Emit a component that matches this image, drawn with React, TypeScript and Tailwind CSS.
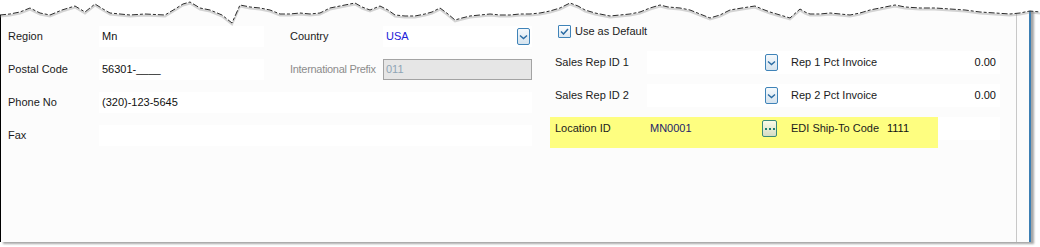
import React from "react";

const edgePts: [number, number][] = [
  [0, 15], [10, 14], [20, 12], [30, 8], [40, 13], [50, 15], [62, 10], [75, 6], [85, 12], [95, 4], [103, 9], [110, 13], [120, 14], [130, 15], [145, 14], [165, 15], [175, 9], [183, 4], [190, 2], [200, 8], [210, 10], [222, 15], [232, 23], [240, 5], [250, 7], [260, 8], [270, 10], [280, 14], [290, 14], [300, 13], [310, 14], [320, 13], [330, 8], [345, 5], [355, 3], [362, 7], [370, 10], [380, 6], [388, 10], [395, 15], [405, 16], [415, 16], [425, 14], [432, 12], [440, 8], [448, 14], [455, 20], [462, 18], [470, 16], [480, 15], [490, 14], [500, 15], [510, 15], [520, 14], [530, 14], [540, 13], [550, 11], [560, 8], [570, 3], [578, 6], [585, 10], [595, 13], [610, 16], [620, 15], [630, 14], [640, 12], [650, 8], [660, 5], [668, 7], [680, 8], [690, 10], [700, 14], [710, 18], [720, 15], [730, 10], [742, 8], [755, 6], [762, 9], [770, 12], [780, 15], [790, 18], [800, 9], [805, 12], [810, 14], [820, 14], [830, 13], [840, 14], [850, 15], [860, 13], [870, 10], [880, 8], [895, 5], [905, 7], [920, 8], [935, 8], [950, 9], [965, 10], [980, 12], [995, 13], [1010, 14], [1020, 13], [1030, 11], [1040, 12],
];

function TornEdge() {
  const line = edgePts.map((p) => p.join(",")).join(" ");
  const poly = `0,0 ${line} 1040,0`;
  const shadow = edgePts.map(([x, y]) => `${x},${y + 1.5}`).join(" ");
  return (
    <svg className="absolute left-0 top-0" width={1040} height={30} viewBox="0 0 1040 30">
      <polyline points={shadow} fill="none" stroke="#888" strokeOpacity={0.35} strokeWidth={2} />
      <polygon points={poly} fill="#ffffff" />
      <polyline points={line} fill="none" stroke="#2a2a2a" strokeWidth={1} strokeDasharray="6 2 3 2" />
    </svg>
  );
}

function DropBtn() {
  return (
    <div className="w-[13px] h-[17px] shrink-0 rounded-[2px] border border-[#3f83b8] bg-gradient-to-b from-[#f5f9fc] to-[#d5e3ee] flex items-center justify-center">
      <svg width={9} height={6} viewBox="0 0 9 6">
        <path d="M1 1.5 L4.5 4.5 L8 1.5" fill="none" stroke="#2a6ba3" strokeWidth={1.4} />
      </svg>
    </div>
  );
}

function EllipsisBtn() {
  return (
    <div className="w-[15px] h-[17px] shrink-0 rounded-[2px] border border-[#3a8a78] bg-gradient-to-b from-[#fbfbe6] to-[#d4dcc4] flex items-center justify-center gap-[2px]">
      <div className="w-[2px] h-[2px] bg-[#1f7f70]" />
      <div className="w-[2px] h-[2px] bg-[#1f7f70]" />
      <div className="w-[2px] h-[2px] bg-[#1f7f70]" />
    </div>
  );
}

function Label({ children, w, gray }: { children?: React.ReactNode; w: string; gray?: boolean }) {
  return (
    <div className={`${w} shrink-0 whitespace-nowrap ${gray ? "text-[#8c8c8c]" : "text-[#1b1b1b]"}`}>{children}</div>
  );
}

export default function App() {
  return (
    <div
      className="relative w-[1040px] h-[247px] bg-white overflow-hidden text-[11px] leading-none"
      style={{ fontFamily: '"Liberation Sans", Arial, sans-serif' }}
    >
      <div className="w-[1031px] h-[242px] bg-[#fcfcfc] border-l border-l-black border-r-2 border-r-[#3c7fb4] flex shadow-[3px_2px_2px_rgba(0,0,0,0.35)]">
        <div className="w-[1016px] shrink-0 h-full border-r border-r-[#c8c8c8] flex">
          {/* Left section */}
          <div className="w-[549px] shrink-0 pt-[26px] pl-[7px] flex flex-col gap-[12px]">
            <div className="flex items-center h-[21px]">
              <Label w="w-[91px]">Region</Label>
              <div className="w-[165px] h-full bg-white flex items-center pl-[3px] text-[#111]">Mn</div>
              <div className="w-[26px] shrink-0" />
              <Label w="w-[93px]">Country</Label>
              <div className="w-[149px] h-full bg-white flex items-center pl-[3px] pr-[2px]">
                <span className="text-[#2020d8]">USA</span>
                <div className="ml-auto">
                  <DropBtn />
                </div>
              </div>
            </div>
            <div className="flex items-center h-[21px]">
              <Label w="w-[91px]">Postal Code</Label>
              <div className="w-[165px] h-full bg-white flex items-center pl-[3px] text-[#111]">56301-____</div>
              <div className="w-[26px] shrink-0" />
              <Label w="w-[93px] tracking-[-0.3px]" gray>International Prefix</Label>
              <div className="w-[149px] h-full bg-[#e6e6e6] border border-[#a3a3a3] flex items-center pl-[2px] text-[#8fa5b5]">011</div>
            </div>
            <div className="flex items-center h-[21px]">
              <Label w="w-[91px]">Phone No</Label>
              <div className="w-[433px] h-full bg-white flex items-center pl-[3px] text-[#111]">(320)-123-5645</div>
            </div>
            <div className="flex items-center h-[21px]">
              <Label w="w-[91px]">Fax</Label>
              <div className="w-[433px] h-full bg-white" />
            </div>
          </div>

          {/* Right section */}
          <div className="flex-1 pt-[24px] flex flex-col">
            <div className="flex items-center h-[14px] pl-[8px]">
              <div className="w-[13px] h-[13px] border border-[#3f83b8] rounded-[1px] bg-gradient-to-b from-[#ffffff] to-[#dce8f2] flex items-center justify-center">
                <svg width={9} height={7} viewBox="0 0 9 7">
                  <path d="M1 3.5 L3.5 6 L8 1" fill="none" stroke="#2a6ba3" strokeWidth={1.5} />
                </svg>
              </div>
              <span className="ml-[4px] text-[#1b1b1b]">Use as Default</span>
            </div>
            <div className="mt-[13px] flex flex-col gap-[10px]">
              <div className="flex items-center h-[23px]">
                <Label w="w-[97px] pl-[5px]">Sales Rep ID 1</Label>
                <div className="w-[353px] h-full bg-white flex items-center">
                  <div className="w-[115px]" />
                  <div className="w-[29px] flex items-center pl-[3px]">
                    <DropBtn />
                  </div>
                  <Label w="w-[96px]">Rep 1 Pct Invoice</Label>
                  <div className="flex-1 text-right pr-[4px] text-[#111]">0.00</div>
                </div>
              </div>
              <div className="flex items-center h-[23px]">
                <Label w="w-[97px] pl-[5px]">Sales Rep ID 2</Label>
                <div className="w-[353px] h-full bg-white flex items-center">
                  <div className="w-[115px]" />
                  <div className="w-[29px] flex items-center pl-[3px]">
                    <DropBtn />
                  </div>
                  <Label w="w-[96px]">Rep 2 Pct Invoice</Label>
                  <div className="flex-1 text-right pr-[4px] text-[#111]">0.00</div>
                </div>
              </div>
              <div className="flex items-start h-[31px]">
                <div className="w-[388px] h-[31px] bg-[#fefe80]">
                  <div className="flex items-center h-[23px]">
                    <Label w="w-[97px] pl-[5px]">Location ID</Label>
                    <div className="w-[115px] pl-[3px] text-[#23236b]">MN0001</div>
                    <EllipsisBtn />
                    <div className="w-[14px]" />
                    <Label w="w-[96px]">EDI Ship-To Code</Label>
                    <div className="flex-1 text-[#111]">1111</div>
                  </div>
                </div>
                <div className="w-[62px] h-[23px] bg-white" />
              </div>
            </div>
          </div>
        </div>
      </div>
      <TornEdge />
    </div>
  );
}
